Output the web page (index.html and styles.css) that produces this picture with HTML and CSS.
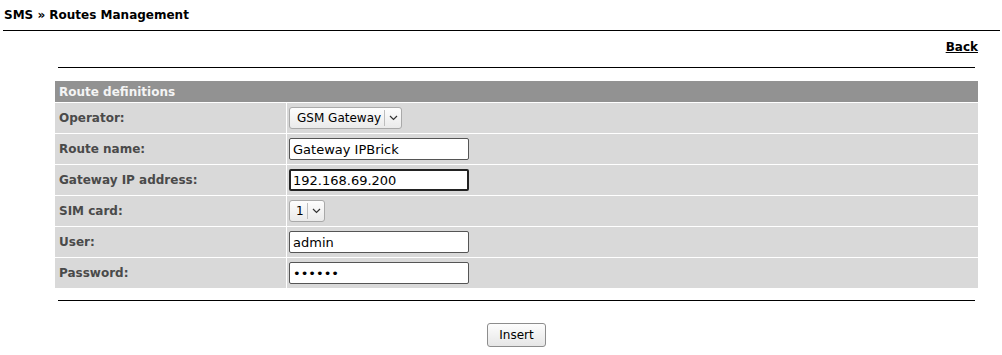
FILE: index.html
```html
<!DOCTYPE html>
<html>
    <head>
        <title>Routes Management</title>
        <link rel="stylesheet" href="styles.css">
    </head>
    <body>
        <h1 class="title">SMS &raquo; Routes Management</h1>
        <div class="top-rule"></div>
        <div class="page">
            <div class="back-row"><a href="#" class="back">Back</a></div>
            <div class="rule"></div>
            <form id="form">
                <table class="routes">
                    <tr class="head">
                        <td colspan="2">Route definitions</td>
                    </tr>
                    <tr>
                        <td class="label">Operator:</td>
                        <td class="field">
                            <div class="select wide"><span>GSM Gateway</span><span class="arrow"><svg width="9" height="6" viewBox="0 0 9 6"><path d="M1 1 L4.5 4.5 L8 1" fill="none" stroke="#333" stroke-width="1.2"/></svg></span></div>
                        </td>
                    </tr>
                    <tr>
                        <td class="label">Route name:</td>
                        <td class="field"><input type="text" class="text" value="Gateway IPBrick" /></td>
                    </tr>
                    <tr>
                        <td class="label">Gateway IP address:</td>
                        <td class="field"><input type="text" class="text focused" value="192.168.69.200" /></td>
                    </tr>
                    <tr>
                        <td class="label">SIM card:</td>
                        <td class="field">
                            <div class="select"><span>1</span><span class="arrow"><svg width="9" height="6" viewBox="0 0 9 6"><path d="M1 1 L4.5 4.5 L8 1" fill="none" stroke="#333" stroke-width="1.2"/></svg></span></div>
                        </td>
                    </tr>
                    <tr>
                        <td class="label">User:</td>
                        <td class="field"><input type="text" class="text" value="admin" /></td>
                    </tr>
                    <tr>
                        <td class="label">Password:</td>
                        <td class="field"><input type="password" class="text" value="secret" /></td>
                    </tr>
                </table>
                <div class="rule bottom"></div>
                <div class="actions">
                    <button type="button" class="insert">Insert</button>
                </div>
            </form>
        </div>
    </body>
</html>
```

FILE: styles.css
```css
body{
    margin: 0;
    padding: 0;
    font-family: "DejaVu Sans", Verdana, sans-serif;
    font-size: 12px;
    color: #000;
    background: #fff;
}
.title{
    margin: 0;
    padding: 8px 0 0 4px;
    height: 14px;
    font-size: 12px;
    font-weight: bold;
    line-height: 14px;
}
.top-rule{
    margin: 8px 2px 0 3px;
    border-top: 1px solid #000;
}
.page{
    margin-left: 55px;
    width: 923px;
}
.back-row{
    display: flex;
    justify-content: flex-end;
    height: 14px;
    padding-top: 9px;
}
.back{
    color: #000;
    font-weight: bold;
    font-size: 12px;
    line-height: 14px;
}
.rule{
    margin: 13px 3px 0 3px;
    border-top: 1px solid #000;
}
.rule.bottom{
    margin-top: 12px;
}
#form{
    margin: 0;
}
.routes{
    margin-top: 13px;
    width: 923px;
    border-collapse: separate;
    border-spacing: 0;
    background: #fff;
    font-size: 12px;
}
.routes td{
    padding: 0;
    background: #d9d9d9;
    border-bottom: 1px solid #fff;
}
.routes tr:last-child td{
    border-bottom: none;
}
.head td{
    height: 21px;
    background: #929292;
    color: #f4f4f4;
    font-weight: bold;
    padding-left: 4px;
}
.label{
    width: 227px;
    height: 30px;
    padding-left: 4px !important;
    font-weight: bold;
    color: #4a4a4a;
    border-right: 1px solid #fff;
}
.field{
    padding-left: 2px !important;
}
.text{
    display: block;
    width: 180px;
    height: 22px;
    margin: 0;
    padding: 0 3px;
    box-sizing: border-box;
    border: 1px solid #555;
    border-radius: 2px;
    background: #fff;
    font-family: "DejaVu Sans", Verdana, sans-serif;
    font-size: 13px;
    color: #000;
    outline: none;
}
.text.focused{
    border: 2px solid #222;
    padding: 0 2px;
}
.select{
    display: inline-flex;
    align-items: center;
    height: 22px;
    box-sizing: border-box;
    border: 1px solid #a9a9a9;
    border-radius: 3px;
    background: linear-gradient(#fdfdfd, #eaeaea);
    font-size: 12px;
    color: #000;
    padding-left: 6px;
}
.select.wide{
    padding-left: 7px;
}
.arrow{
    display: flex;
    align-items: center;
    justify-content: center;
    height: 16px;
    margin-left: 3px;
    padding: 0 3px 0 4px;
    border-left: 1px solid #bdbdbd;
}
.actions{
    display: flex;
    justify-content: center;
    padding-top: 22px;
}
.insert{
    height: 24px;
    padding: 0 11px;
    border: 1px solid #8d8d8d;
    border-radius: 3px;
    background: linear-gradient(#fdfdfd, #e6e6e6);
    font-family: "DejaVu Sans", Verdana, sans-serif;
    font-size: 12px;
    color: #000;
}
```
